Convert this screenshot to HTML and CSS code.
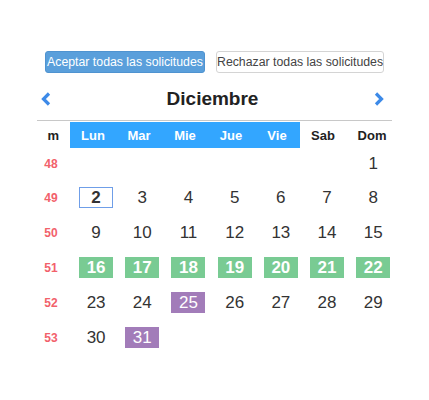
FILE: index.html
```html
<!DOCTYPE html>
<html lang="es">
<head>
    <meta charset="UTF-8">
    <meta name="viewport" content="width=device-width, initial-scale=1.0">
    <title>Calendario</title>
    <link rel="stylesheet" href="styles.css">
</head>
<body>

    <div class="panel">
        <div class="actions">
            <button class="btn btn-accept">Aceptar todas las solicitudes</button>
            <button class="btn btn-reject">Rechazar todas las solicitudes</button>
        </div>

        <div class="month-nav">
            <a class="arrow" href="#">
                <svg width="10" height="14" viewBox="0 0 10 14"><path d="M8 1.5 L2.5 7 L8 12.5" fill="none" stroke="#3d8ae8" stroke-width="3.2"/></svg>
            </a>
            <span class="month">Diciembre</span>
            <a class="arrow" href="#">
                <svg width="10" height="14" viewBox="0 0 10 14"><path d="M2 1.5 L7.5 7 L2 12.5" fill="none" stroke="#3d8ae8" stroke-width="3.2"/></svg>
            </a>
        </div>

        <div class="calendar">
            <div class="head-row">
                <div class="wk-head">m</div>
                <div class="work">
                    <span>Lun</span><span>Mar</span><span>Mie</span><span>Jue</span><span>Vie</span>
                </div>
                <span class="we">Sab</span>
                <span class="we">Dom</span>
            </div>

            <div class="row">
                <div class="wk">48</div>
                <span></span><span></span><span></span><span></span><span></span><span></span>
                <span>1</span>
            </div>
            <div class="row">
                <div class="wk">49</div>
                <span><b class="today">2</b></span>
                <span>3</span><span>4</span><span>5</span><span>6</span><span>7</span><span>8</span>
            </div>
            <div class="row">
                <div class="wk">50</div>
                <span>9</span><span>10</span><span>11</span><span>12</span><span>13</span><span>14</span><span>15</span>
            </div>
            <div class="row">
                <div class="wk">51</div>
                <span><b class="ok">16</b></span>
                <span><b class="ok">17</b></span>
                <span><b class="ok">18</b></span>
                <span><b class="ok">19</b></span>
                <span><b class="ok">20</b></span>
                <span><b class="ok">21</b></span>
                <span><b class="ok">22</b></span>
            </div>
            <div class="row">
                <div class="wk">52</div>
                <span>23</span><span>24</span>
                <span><b class="holiday">25</b></span>
                <span>26</span><span>27</span><span>28</span><span>29</span>
            </div>
            <div class="row">
                <div class="wk">53</div>
                <span>30</span>
                <span><b class="holiday">31</b></span>
                <span></span><span></span><span></span><span></span><span></span>
            </div>
        </div>
    </div>

</body>
</html>
```

FILE: styles.css
```css
/* Calendario de solicitudes */
body {
    margin: 0;
    font-family: "Liberation Sans", Arial, sans-serif;
    background-color: #fff;
    color: #222;
}

.panel {
    width: 355px;
    padding: 51px 0 0 37px;
}

.actions {
    display: flex;
    gap: 11px;
    padding-left: 8px;
}

.btn {
    font-family: "Liberation Sans", Arial, sans-serif;
    font-size: 12.3px;
    height: 22px;
    padding: 0;
    border-radius: 3px;
    white-space: nowrap;
    cursor: pointer;
}

.btn-accept {
    width: 160px;
    background-color: #5a9fdb;
    border: 1px solid #4f93d0;
    color: #fff;
}

.btn-reject {
    width: 168px;
    background-color: #fff;
    border: 1px solid #d4d4d4;
    color: #444;
}

.month-nav {
    display: flex;
    justify-content: space-between;
    align-items: center;
    height: 30px;
    margin-top: 11px;
    padding: 0 8px 6px 4px;
    border-bottom: 1px solid #c8c8c8;
}

.arrow {
    display: flex;
    align-items: center;
}

.month {
    font-size: 19px;
    font-weight: bold;
    color: #222;
}

.head-row {
    display: flex;
    height: 26px;
    align-items: center;
    font-size: 13px;
    font-weight: bold;
    margin-top: 1px;
}

.wk-head {
    width: 33px;
    padding-right: 11px;
    box-sizing: border-box;
    text-align: right;
    flex-shrink: 0;
}

.work {
    display: flex;
    height: 26px;
    align-items: center;
    background-color: #33a6ff;
    color: #fff;
}

.work span,
.we {
    width: 46px;
    text-align: center;
    flex-shrink: 0;
}

.we {
    color: #222;
}

.we + .we {
    padding-left: 3px;
}

.row {
    display: flex;
    align-items: center;
    height: 35px;
    font-size: 17px;
    color: #333;
}

.row:nth-child(2) {
    height: 32px;
}

.wk {
    width: 36px;
    flex-shrink: 0;
    text-align: center;
    font-size: 12px;
    font-weight: bold;
    color: #f2616b;
    padding: 0 12px 0 4px;
    box-sizing: border-box;
}

.row span {
    width: 46.2px;
    flex-shrink: 0;
    display: flex;
    justify-content: center;
}

.row b {
    display: inline-block;
    width: 34px;
    height: 21px;
    line-height: 21px;
    text-align: center;
    box-sizing: border-box;
}

.today {
    border: 1px solid #6f9ee8;
    line-height: 19px !important;
}

.ok {
    background-color: #79cb93;
    color: #fff;
}

.holiday {
    background-color: #a27cb9;
    color: #fff;
    font-weight: normal;
}
```
